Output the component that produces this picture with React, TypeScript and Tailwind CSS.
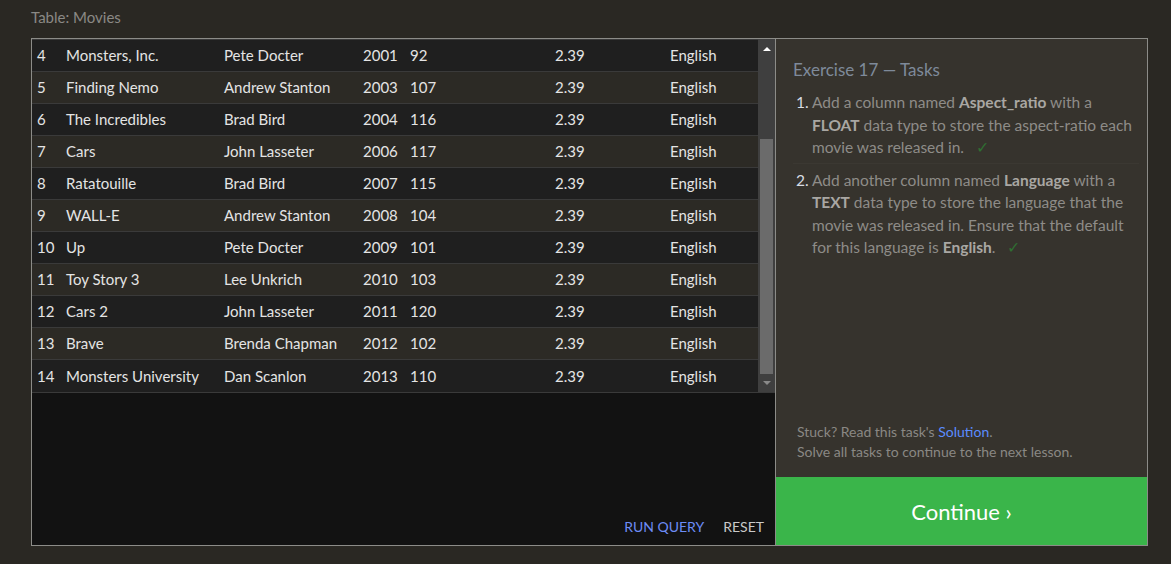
import React from "react";

const movies = [
  { id: 4, title: "Monsters, Inc.", director: "Pete Docter", year: 2001, length: 92 },
  { id: 5, title: "Finding Nemo", director: "Andrew Stanton", year: 2003, length: 107 },
  { id: 6, title: "The Incredibles", director: "Brad Bird", year: 2004, length: 116 },
  { id: 7, title: "Cars", director: "John Lasseter", year: 2006, length: 117 },
  { id: 8, title: "Ratatouille", director: "Brad Bird", year: 2007, length: 115 },
  { id: 9, title: "WALL-E", director: "Andrew Stanton", year: 2008, length: 104 },
  { id: 10, title: "Up", director: "Pete Docter", year: 2009, length: 101 },
  { id: 11, title: "Toy Story 3", director: "Lee Unkrich", year: 2010, length: 103 },
  { id: 12, title: "Cars 2", director: "John Lasseter", year: 2011, length: 120 },
  { id: 13, title: "Brave", director: "Brenda Chapman", year: 2012, length: 102 },
  { id: 14, title: "Monsters University", director: "Dan Scanlon", year: 2013, length: 110 },
];

const Check = () => <span className="ml-3 text-[#2f6e32]">✓</span>;

const B = ({ children }: { children: React.ReactNode }) => (
  <b className="text-[#a9a7a3]">{children}</b>
);

const App = () => {
  return (
    <div
      className="w-[1171px] h-[564px] bg-[#2a2823] px-[31px] pt-[6px] overflow-hidden"
      style={{ fontFamily: "Lato, 'Open Sans', sans-serif" }}
    >
      <div className="text-[15px] text-[#8a8985] h-[32px] leading-[22px]">Table: Movies</div>

      <div className="flex w-[1117px] h-[508px] border border-[#8c8c88]">
        {/* results + editor */}
        <div className="w-[743px] flex flex-col bg-[#121212]">
          <div className="flex h-[354px] border-b border-[#3a3a3a]">
            <div className="flex-1 border-t border-[#3a3a3a] text-[15px] text-[#e4e4e4]">
              {movies.map((m, i) => (
                <div
                  key={m.id}
                  className={`flex items-center h-[32px] border-b border-[#3a3a3a] ${
                    i % 2 === 0 ? "bg-[#1f1f1f]" : "bg-[#2c2a25]"
                  } ${i === movies.length - 1 ? "border-b-0" : ""}`}
                >
                  <span className="w-[34px] pl-[5px]">{m.id}</span>
                  <span className="w-[158px]">{m.title}</span>
                  <span className="w-[139px]">{m.director}</span>
                  <span className="w-[47px]">{m.year}</span>
                  <span className="w-[145px]">{m.length}</span>
                  <span className="w-[115px]">2.39</span>
                  <span>English</span>
                </div>
              ))}
            </div>
            <div className="w-[17px] bg-[#3f3f3f] flex flex-col items-center">
              <div className="h-[20px] flex items-center justify-center">
                <div className="w-0 h-0 border-l-[4px] border-r-[4px] border-b-[4px] border-l-transparent border-r-transparent border-b-white" />
              </div>
              <div className="mt-[80px] w-[13px] h-[235px] bg-[#6b6b6b]" />
              <div className="flex-1 flex items-center justify-center">
                <div className="w-0 h-0 border-l-[4px] border-r-[4px] border-t-[4px] border-l-transparent border-r-transparent border-t-[#8a8a8a]" />
              </div>
            </div>
          </div>
          <div className="flex-1 flex items-end justify-end gap-[19px] pr-[11px] pb-[8px] text-[14px]">
            <span className="text-[#6d8cf5]">RUN QUERY</span>
            <span className="text-[#c9c9c9]">RESET</span>
          </div>
        </div>

        {/* tasks */}
        <div className="flex-1 flex flex-col bg-[#36332d] border-l border-[#8c8c88]">
          <div className="flex-1 pl-[17px] pr-[8px] pt-[19px]">
            <div className="text-[17px] text-[#7e8a9a] leading-[24px]">Exercise 17 — Tasks</div>
            <ol className="mt-[9px] text-[15.5px] leading-[22.5px] text-[#8e8c88] whitespace-nowrap">
              <li className="flex pb-[4px] border-b border-[#3b3832]">
                <span className="w-[19px] pl-[3px] text-[#d8dce4]">1.</span>
                <span className="flex-1">
                  Add a column named <B>Aspect_ratio</B> with a
                  <br />
                  <B>FLOAT</B> data type to store the aspect-ratio each
                  <br />
                  movie was released in.
                  <Check />
                </span>
              </li>
              <li className="flex pt-[5px]">
                <span className="w-[19px] pl-[3px] text-[#d8dce4]">2.</span>
                <span className="flex-1">
                  Add another column named <B>Language</B> with a
                  <br />
                  <B>TEXT</B> data type to store the language that the
                  <br />
                  movie was released in. Ensure that the default
                  <br />
                  for this language is <B>English</B>.
                  <Check />
                </span>
              </li>
            </ol>
          </div>
          <div className="pl-[21px] pb-[15px] text-[14px] leading-[20px] text-[#8a8884]">
            <div>
              Stuck? Read this task's <span className="text-[#5b8cff]">Solution</span>.
            </div>
            <div>Solve all tasks to continue to the next lesson.</div>
          </div>
          <div className="h-[68px] bg-[#3ab54a] flex items-center justify-center text-[22px] text-white">
            Continue ›
          </div>
        </div>
      </div>
    </div>
  );
};

export default App;
